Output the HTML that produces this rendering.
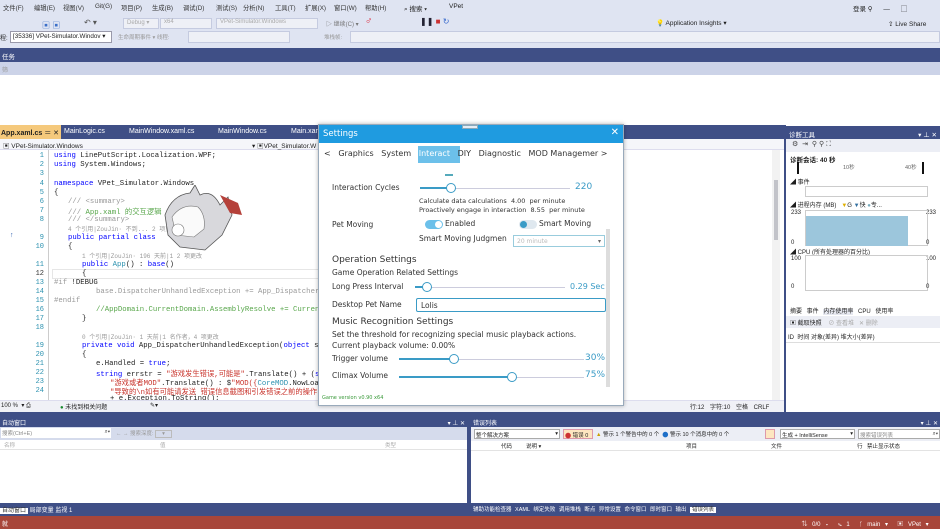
<!DOCTYPE html>
<html><head><meta charset="utf-8"><style>
*{margin:0;padding:0;box-sizing:border-box}
body{width:940px;height:529px;overflow:hidden;position:relative;background:#fff;font-family:"Liberation Sans","Noto Sans CJK SC",sans-serif;font-size:7px;color:#1e1e1e}
.a{position:absolute;white-space:nowrap}
.navy{background:#3f4f86;color:#fff}
.ln{position:absolute;left:20px;width:24px;text-align:right;color:#2b91af;font-family:"Liberation Mono",monospace;font-size:7px}
.cd{position:absolute;left:54px;font-family:"Liberation Mono","Noto Sans CJK SC",monospace;font-size:7.3px;white-space:nowrap}
.k{color:#0000ff}.g{color:#57a64a}.t{color:#2b91af}.s{color:#c8322a}.gr{color:#999}
.dlg{font-family:"DejaVu Sans","Noto Sans CJK SC",sans-serif;color:#333}
.m{position:absolute;top:3px;font-size:6.3px;color:#333}
</style></head><body>
<!-- top chrome -->
<div class="a" style="left:0;top:0;width:940px;height:48px;background:#dfe4f2"></div>
<span class="m" style="left:3px">文件(F)</span><span class="m" style="left:34px">编辑(E)</span><span class="m" style="left:63px">视图(V)</span><span class="m" style="left:95px">Git(G)</span><span class="m" style="left:121px">项目(P)</span><span class="m" style="left:152px">生成(B)</span><span class="m" style="left:183px">调试(D)</span><span class="m" style="left:216px">测试(S)</span><span class="m" style="left:243px">分析(N)</span><span class="m" style="left:275px">工具(T)</span><span class="m" style="left:305px">扩展(X)</span><span class="m" style="left:334px">窗口(W)</span><span class="m" style="left:365px">帮助(H)</span>
<div class="a" style="left:404px;top:3px;font-size:6.5px">⌕ 搜索 ▾</div>
<div class="a" style="left:449px;top:3px;font-size:6.5px">VPet</div>
<div class="a" style="left:853px;top:3px;font-size:6.5px">登录 ⚲ &nbsp;&nbsp;&nbsp;&nbsp;&nbsp;— &nbsp;&nbsp;&nbsp;&nbsp;&nbsp;▢</div>
<div class="a" style="left:888px;top:20px;font-size:6.5px">⇪ Live Share</div>
<div class="a" style="left:123px;top:18px;width:36px;height:11px;background:#eef0f6;border:1px solid #c5cbe0;color:#aaa;font-size:6px;padding-left:3px">Debug ▾</div>
<div class="a" style="left:160px;top:18px;width:52px;height:11px;background:#eef0f6;border:1px solid #c5cbe0;color:#aaa;font-size:6px;padding-left:3px">x64</div>
<div class="a" style="left:216px;top:18px;width:102px;height:11px;background:#eef0f6;border:1px solid #c5cbe0;color:#aaa;font-size:6px;padding-left:3px">VPet-Simulator.Windows</div>
<div class="a" style="left:42px;top:20px;width:30px;height:8px;color:#3b6fc8;font-size:8px">▣ ▣</div>
<div class="a" style="left:84px;top:18px;font-size:8px;color:#555">↶ ▾</div>
<div class="a" style="left:326px;top:19px;font-size:6px;color:#777">▷ 继续(C) ▾</div>
<div class="a" style="left:365px;top:16px;font-size:10px;color:#d23">♂</div>
<div class="a" style="left:420px;top:17px;font-size:8px;color:#223">❚❚ <span style="color:#c33">■</span> <span style="color:#36c">↻</span></div>
<div class="a" style="left:656px;top:19px;font-size:6.5px">💡 Application Insights ▾</div>
<div class="a" style="left:0;top:33px;font-size:6px">程: </div>
<div class="a" style="left:10px;top:31px;width:102px;height:12px;background:#fff;border:1px solid #99a;font-size:6.3px;padding:1px 2px">[35336] VPet-Simulator.Windov ▾</div>
<div class="a" style="left:118px;top:33px;font-size:5.5px;color:#999">生命周期事件 ▾ 线程:</div>
<div class="a" style="left:188px;top:31px;width:102px;height:12px;background:#eef0f6;border:1px solid #c5cbe0"></div>
<div class="a" style="left:324px;top:33px;font-size:5.5px;color:#999">堆栈帧:</div>
<div class="a" style="left:350px;top:31px;width:590px;height:12px;background:#eef0f6;border:1px solid #c5cbe0"></div>
<div class="a navy" style="left:0;top:48px;width:940px;height:14px;padding:3px 2px;font-size:6.5px">任务</div>
<div class="a" style="left:0;top:62px;width:940px;height:13px;background:#ccd3e8;color:#999;font-size:6px;padding:3px 2px">筛</div>
<!-- editor tab strip -->
<div class="a navy" style="left:0;top:125px;width:784px;height:14px"></div>
<div class="a" style="left:0;top:125px;width:61px;height:14px;background:#f5c97c;font-size:7px;font-weight:bold;padding:3px 1px">App.xaml.cs <span style="font-weight:normal">＝ ✕</span></div>
<div class="a" style="left:64px;top:128px;color:#fff;font-size:7px">MainLogic.cs</div>
<div class="a" style="left:129px;top:128px;color:#fff;font-size:7px">MainWindow.xaml.cs</div>
<div class="a" style="left:218px;top:128px;color:#fff;font-size:7px">MainWindow.cs</div>
<div class="a" style="left:291px;top:128px;color:#fff;font-size:7px">Main.xam</div>
<div class="a" style="left:0;top:139px;width:784px;height:11px;background:#f5f6fa;border-bottom:1px solid #dde"></div>
<div class="a" style="left:3px;top:140px;font-size:6.5px">▣ VPet-Simulator.Windows</div>
<div class="a" style="left:252px;top:140px;font-size:6.5px">▾ ▣VPet_Simulator.W</div>
<!-- code -->
<div class="a" style="left:10px;top:232px;color:#3060b0;font-size:7px">↑</div>
<div class="a" style="left:48px;top:150px;width:1px;height:250px;background:#ccc"></div>
<div class="a" style="left:52px;top:269px;width:270px;height:10px;border:1px solid #e6e6e6"></div>
<div class="ln" style="top:152px">1</div><div class="cd" style="top:152px"><span class="k">using</span> LinePutScript.Localization.WPF;</div>
<div class="ln" style="top:161px">2</div><div class="cd" style="top:161px"><span class="k">using</span> System.Windows;</div>
<div class="ln" style="top:170px">3</div>
<div class="ln" style="top:180px">4</div><div class="cd" style="top:180px"><span class="k">namespace</span> VPet_Simulator.Windows</div>
<div class="ln" style="top:189px">5</div><div class="cd" style="top:189px">{</div>
<div class="ln" style="top:198px">6</div><div class="cd g" style="top:198px;left:68px"><span class="gr">/// &lt;summary&gt;</span></div>
<div class="ln" style="top:207px">7</div><div class="cd g" style="top:207px;left:68px"><span class="gr">///</span> App.xaml 的交互逻辑</div>
<div class="ln" style="top:216px">8</div><div class="cd gr" style="top:216px;left:68px">/// &lt;/summary&gt;</div>
<div class="cd gr" style="top:224px;left:68px;font-size:6px">4 个引用|ZouJin· 不到...                         2 项更改</div>
<div class="ln" style="top:234px">9</div><div class="cd" style="top:234px;left:68px"><span class="k">public partial class</span></div>
<div class="ln" style="top:243px">10</div><div class="cd" style="top:243px;left:68px">{</div>
<div class="cd gr" style="top:251px;left:82px;font-size:6px">1 个引用|ZouJin· 196 天前|1          2 项更改</div>
<div class="ln" style="top:261px">11</div><div class="cd" style="top:261px;left:82px"><span class="k">public</span> <span class="t">App</span>() : <span class="k">base</span>()</div>
<div class="ln" style="top:270px;color:#333">12</div><div class="cd" style="top:270px;left:82px">{</div>
<div class="ln" style="top:279px">13</div><div class="cd" style="top:279px"><span class="gr">#if</span> !DEBUG</div>
<div class="ln" style="top:288px">14</div><div class="cd gr" style="top:288px;left:96px">base.DispatcherUnhandledException += App_DispatcherUnhandledEx</div>
<div class="ln" style="top:297px">15</div><div class="cd gr" style="top:297px">#endif</div>
<div class="ln" style="top:306px">16</div><div class="cd g" style="top:306px;left:96px">//AppDomain.CurrentDomain.AssemblyResolve += CurrentDomain_Ass</div>
<div class="ln" style="top:315px">17</div><div class="cd" style="top:315px;left:82px">}</div>
<div class="ln" style="top:324px">18</div>
<div class="cd gr" style="top:332px;left:82px;font-size:6px">0 个引用|ZouJin· 1 天前|1 名作者，4 项更改</div>
<div class="ln" style="top:342px">19</div><div class="cd" style="top:342px;left:82px"><span class="k">private void</span> App_DispatcherUnhandledException(<span class="k">object</span> sender, Syste</div>
<div class="ln" style="top:351px">20</div><div class="cd" style="top:351px;left:82px">{</div>
<div class="ln" style="top:360px">21</div><div class="cd" style="top:360px;left:96px">e.Handled = <span class="k">true</span>;</div>
<div class="ln" style="top:369px">22</div><div class="cd" style="top:369px;left:96px"><span class="k">string</span> errstr = <span class="s">"游戏发生错误,可能是"</span>.Translate() + (<span class="k">string</span>.IsN</div>
<div class="ln" style="top:378px">23</div><div class="cd" style="top:378px;left:110px"><span class="s">"游戏或者MOD"</span>.Translate() : $<span class="s">"MOD({</span><span class="t">CoreMOD</span>.NowLoading<span class="s">})"</span>) +</div>
<div class="ln" style="top:387px">24</div><div class="cd s" style="top:387px;left:110px">"导致的\n如有可能请发送 错误信息截图和引发错误之前的操作 给开发</div>
<div class="cd" style="top:395px;left:110px">+ e.Exception.ToString();</div>
<!-- pet figure -->
<svg class="a" style="left:150px;top:185px" width="95" height="75" viewBox="0 0 95 75">
<path d="M40 8 L45 0 L50 10 Q62 4 70 20 L78 12 L82 30 L72 50 L55 65 L30 62 L18 50 L15 30 Q22 10 40 8Z" fill="#d8d8dc" stroke="#555" stroke-width="0.8"/>
<path d="M22 32 Q32 18 48 22 Q56 30 54 44 L44 52 L26 50Z" fill="#fafafa" stroke="#777" stroke-width="0.6"/>
<path d="M70 10 L88 18 L92 30 L80 28Z" fill="#b5413a"/>
<circle cx="28" cy="45" r="6" fill="#fff" stroke="#777" stroke-width="0.6"/>
</svg>
<!-- editor status -->
<div class="a" style="left:0;top:400px;width:784px;height:12px;background:#f0f1f6;border-top:1px solid #dde"></div>
<div class="a" style="left:1px;top:402px;font-size:6px">100 % &nbsp;▾ ⎙</div>
<div class="a" style="left:60px;top:402px;font-size:6px"><span style="color:#1a8a2e">●</span> 未找到相关问题</div>
<div class="a" style="left:150px;top:402px;font-size:6px">✎▾</div>
<div class="a" style="left:690px;top:402px;font-size:6px;word-spacing:4px">行:12 字符:10 空格 CRLF</div>
<div class="a" style="left:772px;top:150px;width:8px;height:250px;background:#f2f2f2"></div>
<div class="a" style="left:774px;top:180px;width:4px;height:60px;background:#c2c3c9"></div>
<!-- diag tools -->
<div class="a" style="left:784px;top:125px;width:156px;height:287px;background:#fff;border-left:2px solid #3f4f86"></div>
<div class="a navy" style="left:786px;top:126px;width:154px;height:13px;font-size:6.5px;padding:3px 3px">诊断工具<span style="float:right">▾ ⊥ ✕</span></div>
<div class="a" style="left:786px;top:139px;width:154px;height:13px;background:#eceef5;font-size:7px;padding:1px 6px;color:#444">⚙ &nbsp;⇥ &nbsp;⚲ ⚲ ⛶</div>
<div class="a" style="left:790px;top:154px;font-size:6.5px;font-weight:bold">诊断会话: 40 秒</div>
<div class="a" style="left:797px;top:162px;width:2px;height:12px;background:#111"></div>
<div class="a" style="left:922px;top:162px;width:2px;height:12px;background:#111"></div>
<div class="a" style="left:843px;top:163px;font-size:5.5px;color:#666">10秒</div>
<div class="a" style="left:905px;top:163px;font-size:5.5px;color:#666">40秒</div>
<div class="a" style="left:790px;top:177px;font-size:6px">◢ 事件</div>
<div class="a" style="left:805px;top:186px;width:123px;height:11px;border:1px solid #ccc"></div>
<div class="a" style="left:790px;top:200px;font-size:6px">◢ 进程内存 (MB) &nbsp;&nbsp;<span style="color:#e0b000">▼</span>G <span style="color:#3370a0">▼</span>快 <span style="color:#7ab">●</span>专...</div>
<div class="a" style="left:791px;top:210px;font-size:6px">233</div><div class="a" style="left:926px;top:210px;font-size:6px">233</div>
<div class="a" style="left:805px;top:210px;width:123px;height:36px;border:1px solid #ccc"></div>
<div class="a" style="left:806px;top:216px;width:102px;height:30px;background:#9cc6dc"></div>
<div class="a" style="left:791px;top:240px;font-size:6px">0</div><div class="a" style="left:926px;top:240px;font-size:6px">0</div>
<div class="a" style="left:790px;top:247px;font-size:6px">◢ CPU (所有处理器的百分比)</div>
<div class="a" style="left:791px;top:256px;font-size:6px">100</div><div class="a" style="left:926px;top:256px;font-size:6px">100</div>
<div class="a" style="left:805px;top:255px;width:123px;height:36px;border:1px solid #ccc"></div>
<div class="a" style="left:791px;top:284px;font-size:6px">0</div><div class="a" style="left:926px;top:284px;font-size:6px">0</div>
<div class="a" style="left:790px;top:306px;font-size:6px;word-spacing:3px">摘要 事件 <span style="background:#e6e8f0">内存使用率</span> CPU 使用率</div>
<div class="a" style="left:786px;top:316px;width:154px;height:12px;background:#eceef5;font-size:6px;padding:2px 4px">▣ 截取快照 &nbsp;&nbsp;&nbsp;<span style="color:#aaa">⊘ 查看堆 &nbsp;&nbsp;✕ 删除</span></div>
<div class="a" style="left:788px;top:332px;font-size:6px">ID &nbsp;时间 对象(差异) 堆大小(差异)</div>
<div class="a" style="left:786px;top:342px;width:154px;height:1px;background:#ddd"></div>
<!-- bottom panels -->
<div class="a" style="left:0;top:412px;width:940px;height:104px;background:#3f4f86"></div>
<div class="a" style="left:0;top:416px;width:467px;height:87px;background:#fff"></div>
<div class="a navy" style="left:0;top:416px;width:467px;height:11px;font-size:6px;padding:2px 2px">自动窗口<span style="float:right">▾ ⊥ ✕</span></div>
<div class="a" style="left:0;top:427px;width:467px;height:13px;background:#d5dbec"></div>
<div class="a" style="left:1px;top:428px;width:110px;height:10px;background:#fff;font-size:5.5px;color:#888;padding:1px">搜索(Ctrl+E)<span style="float:right;color:#333">⌕▾</span></div>
<div class="a" style="left:116px;top:429px;font-size:5.5px;color:#999">← → 搜索深度: <span style="border:1px solid #bbb;padding:0 6px">▾</span></div>
<div class="a" style="left:0;top:440px;width:467px;height:10px;border-bottom:1px solid #e3e3e3;font-size:5.5px;color:#aaa;padding:1px 4px">名称<span class="a" style="left:160px">值</span><span class="a" style="left:385px">类型</span></div>
<div class="a" style="left:0;top:505px;font-size:6px;color:#fff"><span style="background:#fff;color:#333;padding:0 2px">自动窗口</span> 局部变量 监视 1</div>
<div class="a" style="left:471px;top:416px;width:469px;height:87px;background:#fff"></div>
<div class="a navy" style="left:471px;top:416px;width:469px;height:11px;font-size:6px;padding:2px 2px">错误列表<span style="float:right">▾ ⊥ ✕</span></div>
<div class="a" style="left:471px;top:427px;width:469px;height:14px;background:#eceef5"></div>
<div class="a" style="left:474px;top:429px;width:86px;height:10px;background:#fff;border:1px solid #aaa;font-size:5.5px;padding:1px">整个解决方案<span style="float:right">▾</span></div>
<div class="a" style="left:563px;top:429px;width:30px;height:10px;background:#fde6c0;border:1px solid #d9a;font-size:5.5px;padding:1px"><span style="color:#c33">⬤</span> 错误 0</div>
<div class="a" style="left:596px;top:430px;font-size:5.5px"><span style="color:#c8a000">▲</span> 警示 1 个警告中的 0 个 &nbsp;<span style="color:#1e6fc8">⬤</span> 警示 10 个消息中的 0 个</div>
<div class="a" style="left:765px;top:429px;width:10px;height:10px;background:#fde6c0;border:1px solid #d9a"></div>
<div class="a" style="left:780px;top:429px;width:75px;height:10px;background:#fff;border:1px solid #aaa;font-size:5.5px;padding:1px">生成 + IntelliSense<span style="float:right">▾</span></div>
<div class="a" style="left:858px;top:429px;width:82px;height:10px;background:#fff;border:1px solid #aaa;font-size:5.5px;color:#888;padding:1px">搜索错误列表<span style="float:right;color:#333">⌕▾</span></div>
<div class="a" style="left:471px;top:441px;width:469px;height:10px;border-bottom:1px solid #e3e3e3;font-size:5.5px;padding:1px 0"><span class="a" style="left:30px">代码</span><span class="a" style="left:55px">说明 ▾</span><span class="a" style="left:215px">项目</span><span class="a" style="left:300px">文件</span><span class="a" style="left:386px">行</span><span class="a" style="left:396px">禁止显示状态</span></div>
<div class="a" style="left:473px;top:505px;font-size:5.5px;color:#fff;word-spacing:2px">辅助功能检查器 XAML 绑定失败 调用堆栈 断点 异常设置 命令窗口 即时窗口 输出 <span style="background:#fff;color:#333;padding:0 2px">错误列表</span></div>
<div class="a" style="left:0;top:516px;width:940px;height:13px;background:#a8463a;color:#fff;font-size:6px;padding:3px 2px">就<span style="float:right;word-spacing:3px">⇅ 0/0 ▾ &nbsp;✎ 1 &nbsp;ᚴ main ▾ &nbsp;▣ VPet ▾ &nbsp;</span></div>
<!-- settings dialog -->
<div class="a dlg" style="left:318px;top:124px;width:306px;height:282px;background:#fff;border:1px solid #9ab;box-shadow:0 0 4px rgba(0,0,0,.3)">
 <div class="a" style="left:0;top:0;width:304px;height:18px;background:#1f9be0;color:#fff;font-size:8.5px;padding:4px 4px">Settings<span style="float:right;font-size:10px;margin-top:-2px">✕</span></div>
 <div class="a" style="left:143px;top:0;width:16px;height:4px;background:#e6ecf5;border:1px solid #8ab"></div>
 <div class="a" style="left:99px;top:21px;width:42px;height:17px;background:#6cc0ea"></div>
 <div class="a" style="left:5px;top:24px;font-size:8px;color:#333">&lt;&nbsp;&nbsp; Graphics &nbsp;&nbsp;System &nbsp;&nbsp;<span style="color:#fff">Interact</span>&nbsp;&nbsp; DIY &nbsp;&nbsp;Diagnostic &nbsp;&nbsp;MOD Managemer &gt;</div>
 <div class="a" style="left:126px;top:49px;width:8px;height:2px;background:#5ab"></div>
 <div class="a" style="left:13px;top:58px;font-size:7.5px">Interaction Cycles</div>
 <div class="a" style="left:101px;top:63px;width:150px;height:1px;background:#ccd"></div>
 <div class="a" style="left:101px;top:62px;width:30px;height:2px;background:#3a9bc6"></div>
 <div class="a" style="left:127px;top:58px;width:10px;height:10px;border-radius:50%;border:1.5px solid #3a9bc6;background:#fff"></div>
 <div class="a" style="left:256px;top:57px;font-size:9px;color:#3a9bc6">220</div>
 <div class="a" style="left:100px;top:72px;font-size:6.5px">Calculate data calculations &nbsp;4.00 &nbsp;per minute</div>
 <div class="a" style="left:100px;top:81px;font-size:6.5px">Proactively engage in interaction &nbsp;8.55 &nbsp;per minute</div>
 <div class="a" style="left:13px;top:95px;font-size:7.5px">Pet Moving</div>
 <div class="a" style="left:106px;top:95px;width:18px;height:9px;border-radius:5px;background:#6cc0ea"></div>
 <div class="a" style="left:116px;top:96px;width:7px;height:7px;border-radius:50%;background:#fff"></div>
 <div class="a" style="left:126px;top:94px;font-size:7.5px">Enabled</div>
 <div class="a" style="left:200px;top:95px;width:18px;height:9px;border-radius:5px;background:#dfe8ef"></div>
 <div class="a" style="left:201px;top:96px;width:7px;height:7px;border-radius:50%;background:#3a9bc6"></div>
 <div class="a" style="left:220px;top:94px;font-size:7.5px">Smart Moving</div>
 <div class="a" style="left:100px;top:109px;font-size:7.5px">Smart Moving Judgmen</div>
 <div class="a" style="left:194px;top:110px;width:92px;height:12px;border:1px solid #9cd;font-size:6px;color:#bbb;padding:2px 3px">20 minute<span style="float:right;color:#666">▾</span></div>
 <div class="a" style="left:287px;top:104px;width:4px;height:158px;background:#ddd"></div>
 <div class="a" style="left:13px;top:130px;font-size:9px">Operation Settings</div>
 <div class="a" style="left:13px;top:143px;font-size:7.5px">Game Operation Related Settings</div>
 <div class="a" style="left:13px;top:157px;font-size:7.5px">Long Press Interval</div>
 <div class="a" style="left:96px;top:162px;width:150px;height:1px;background:#ccd"></div>
 <div class="a" style="left:96px;top:161px;width:10px;height:2px;background:#3a9bc6"></div>
 <div class="a" style="left:103px;top:157px;width:10px;height:10px;border-radius:50%;border:1.5px solid #3a9bc6;background:#fff"></div>
 <div class="a" style="left:251px;top:157px;font-size:8px;color:#3a9bc6">0.29 Sec</div>
 <div class="a" style="left:13px;top:175px;font-size:7.5px">Desktop Pet Name</div>
 <div class="a" style="left:97px;top:173px;width:190px;height:14px;border:1.5px solid #3a9bc6;border-radius:2px;font-size:7.5px;padding:2px 4px">Lolis</div>
 <div class="a" style="left:13px;top:192px;font-size:9px">Music Recognition Settings</div>
 <div class="a" style="left:13px;top:205px;font-size:7.5px">Set the threshold for recognizing special music playback actions.</div>
 <div class="a" style="left:13px;top:216px;font-size:7.5px">Current playback volume: 0.00%</div>
 <div class="a" style="left:13px;top:229px;font-size:7.5px">Trigger volume</div>
 <div class="a" style="left:80px;top:234px;width:185px;height:1px;background:#ccd"></div>
 <div class="a" style="left:80px;top:233px;width:54px;height:2px;background:#3a9bc6"></div>
 <div class="a" style="left:130px;top:229px;width:10px;height:10px;border-radius:50%;border:1.5px solid #3a9bc6;background:#fff"></div>
 <div class="a" style="left:266px;top:228px;font-size:9px;color:#3a9bc6">30%</div>
 <div class="a" style="left:13px;top:246px;font-size:7.5px">Climax Volume</div>
 <div class="a" style="left:80px;top:252px;width:185px;height:1px;background:#ccd"></div>
 <div class="a" style="left:80px;top:251px;width:112px;height:2px;background:#3a9bc6"></div>
 <div class="a" style="left:188px;top:247px;width:10px;height:10px;border-radius:50%;border:1.5px solid #3a9bc6;background:#fff"></div>
 <div class="a" style="left:266px;top:245px;font-size:9px;color:#3a9bc6">75%</div>
 <div class="a" style="left:3px;top:270px;font-size:5px;color:#3a9a3a">Game version v0.90 x64</div>
</div>
</body></html>
